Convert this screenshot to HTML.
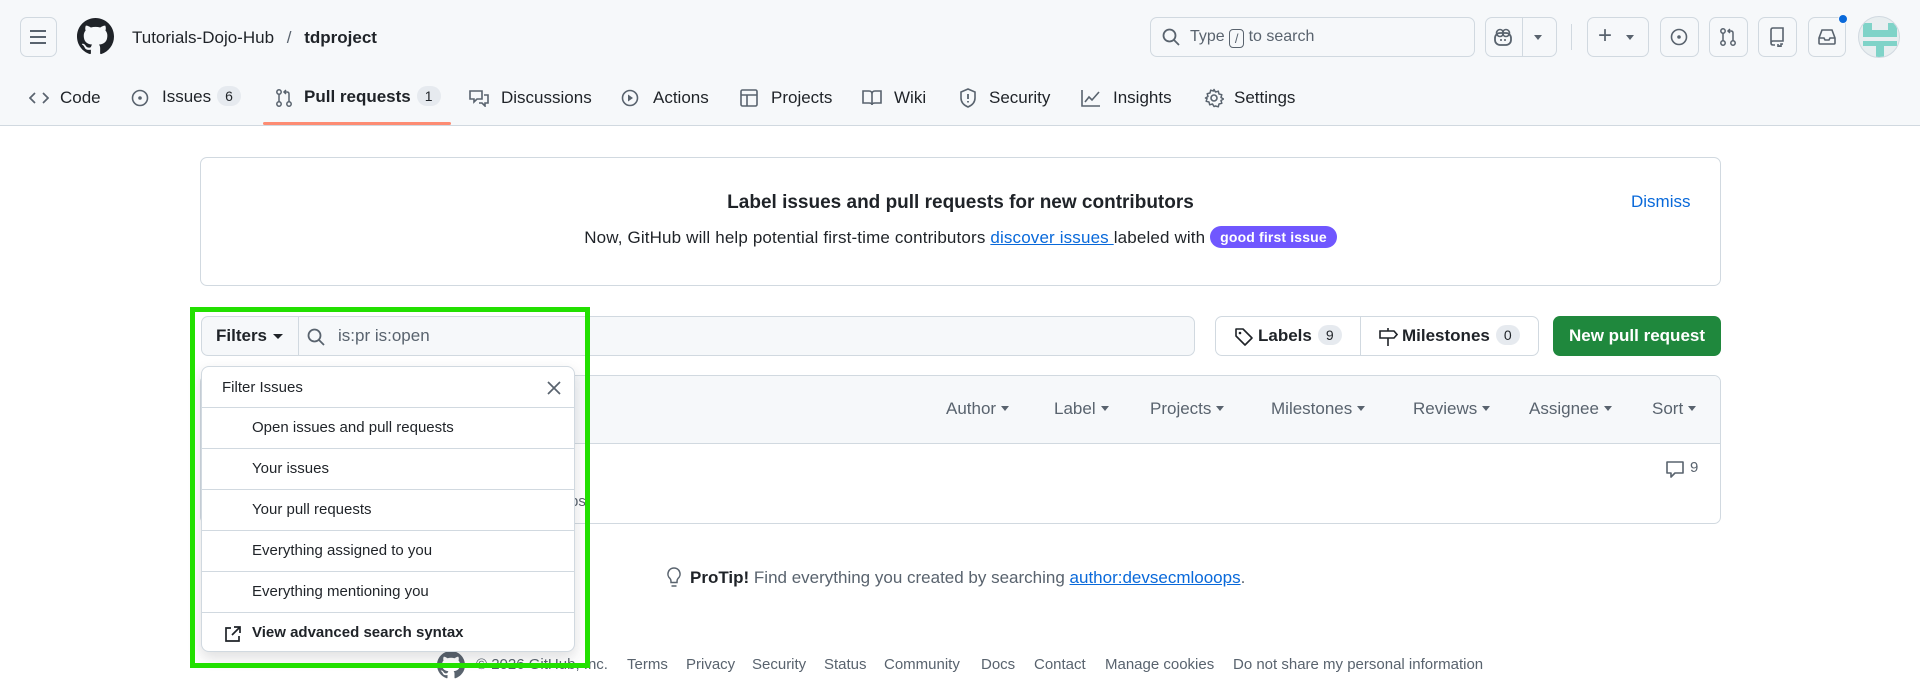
<!DOCTYPE html>
<html><head><meta charset="utf-8">
<style>
*{box-sizing:border-box;margin:0;padding:0}
body{width:1920px;height:677px;overflow:hidden;background:#fff;font-family:"Liberation Sans",sans-serif;color:#1f2328;position:relative}
.a{position:absolute;white-space:nowrap}
.hdr{position:absolute;left:0;top:0;width:1920px;height:126px;background:#f6f8fa;border-bottom:1px solid #d1d9e0}
.btn{position:absolute;border:1px solid #d1d9e0;border-radius:7px;background:#f6f8fa}
.tab{position:absolute;top:88px;font-size:17px;color:#1f2328}
.ic{position:absolute}
.cnt{display:inline-block;background:#e6eaef;border-radius:12px;padding:2px 8px;font-size:14px;margin-left:6px;vertical-align:1px}
svg{display:block}
.fi{position:absolute;left:0;width:373px;height:41px;border-top:1px solid #d1d9e0;font-size:15px;padding-left:50px;line-height:40px}
.sel{position:absolute;top:399px;font-size:17px;color:#59636e}
.sel:after{content:"";display:inline-block;border:4.5px solid transparent;border-top:5px solid #59636e;margin-left:5px;vertical-align:-1px}
.ft{position:absolute;top:656px;font-size:15px;color:#59636e}
</style></head><body>
<div class="hdr"></div>
<div class="btn" style="left:20px;top:17px;width:37px;height:40px;"></div>
<svg class="ic" style="left:29px;top:29px" width="18" height="16"><path d="M1 2h16M1 8h16M1 14h16" stroke="#59636e" stroke-width="2"/></svg>
<svg class="ic" style="left:77px;top:18px" width="37" height="37" viewBox="0 0 16 16"><path fill="#1f2328" d="M8 0C3.58 0 0 3.58 0 8c0 3.54 2.29 6.53 5.47 7.590.4.07.55-.17.55-.38 0-.19-.01-.82-.01-1.49-2.01.37-2.53-.49-2.69-.94-.09-.23-.48-.94-.82-1.13-.28-.15-.68-.52-.01-.53.63-.01 1.08.58 1.23.82.72 1.21 1.87.87 2.33.66.07-.52.28-.87.51-1.07-1.78-.2-3.64-.89-3.64-3.95 0-.87.31-1.59.82-2.15-.08-.2-.36-1.02.08-2.12 0 0 .67-.21 2.2.82.64-.18 1.32-.27 2-.27.68 0 1.36.09 2 .27 1.53-1.04 2.2-.82 2.2-.82.44 1.1.16 1.92.08 2.12.51.56.82 1.27.82 2.15 0 3.07-1.87 3.75-3.65 3.95.29.25.54.73.54 1.48 0 1.07-.01 1.93-.01 2.2 0 .21.15.46.55.38A8.013 8.013 0 0016 8c0-4.42-3.58-8-8-8z"/></svg>
<div class="a" style="left:132px;top:28px;font-size:17px">Tutorials-Dojo-Hub <span style="color:#59636e;margin:0 8px">/</span> <b>tdproject</b></div>

<div class="btn" style="left:1150px;top:17px;width:325px;height:40px;"></div>
<svg class="ic" style="left:1162px;top:28px" width="18" height="18"><circle cx="7.5" cy="7.5" r="6" fill="none" stroke="#59636e" stroke-width="1.8"/><path d="M12 12l5 5" stroke="#59636e" stroke-width="1.8"/></svg>
<div class="a" style="left:1190px;top:28px;font-size:16px;color:#59636e">Type <span style="display:inline-block;border:1px solid #59636e;border-radius:4px;width:15px;height:19px;text-align:center;font-size:13px;line-height:17px;vertical-align:-2px">/</span> to search</div>
<div class="btn" style="left:1485px;top:17px;width:72px;height:40px;"></div>
<div class="a" style="left:1522px;top:17px;width:1px;height:40px;background:#d1d9e0"></div>
<svg class="ic" style="left:1493px;top:28px" width="20" height="18"><rect x="2" y="5" width="16" height="12" rx="5" fill="none" stroke="#59636e" stroke-width="1.8"/><circle cx="7" cy="5" r="3.5" fill="none" stroke="#59636e" stroke-width="1.6"/><circle cx="13" cy="5" r="3.5" fill="none" stroke="#59636e" stroke-width="1.6"/><path d="M8 11v2M12 11v2" stroke="#59636e" stroke-width="1.6"/></svg>
<div class="a" style="left:1534px;top:35px;border:4.5px solid transparent;border-top:5px solid #59636e"></div>
<div class="a" style="left:1571px;top:24px;width:1px;height:26px;background:#d1d9e0"></div>
<div class="btn" style="left:1587px;top:17px;width:62px;height:40px;"></div>
<div class="a" style="left:1598px;top:22px;font-size:24px;color:#59636e">+</div>
<div class="a" style="left:1626px;top:35px;border:4.5px solid transparent;border-top:5px solid #59636e"></div>
<div class="btn" style="left:1660px;top:17px;width:39px;height:40px;"></div>
<svg class="ic" style="left:1670px;top:28px" width="18" height="18"><circle cx="9" cy="9" r="7.5" fill="none" stroke="#59636e" stroke-width="1.6"/><circle cx="9" cy="9" r="1.8" fill="#59636e"/></svg>
<div class="btn" style="left:1709px;top:17px;width:39px;height:40px;"></div>
<svg class="ic" style="left:1719px;top:27px" width="18" height="20"><circle cx="4" cy="4" r="2.2" fill="none" stroke="#59636e" stroke-width="1.5"/><circle cx="4" cy="16" r="2.2" fill="none" stroke="#59636e" stroke-width="1.5"/><circle cx="14" cy="16" r="2.2" fill="none" stroke="#59636e" stroke-width="1.5"/><path d="M4 6v8M14 14V6q0-2-2-2H9M11 2L9 4l2 2" fill="none" stroke="#59636e" stroke-width="1.5"/></svg>
<div class="btn" style="left:1758px;top:17px;width:39px;height:40px;"></div>
<svg class="ic" style="left:1769px;top:27px" width="16" height="20"><path d="M2 16V3q0-2 2-2h10v13H4q-2 0-2 2t2 2h2M9 17v3l1.5-1 1.5 1v-3h2" fill="none" stroke="#59636e" stroke-width="1.6"/></svg>
<div class="btn" style="left:1808px;top:17px;width:38px;height:40px;"></div>
<svg class="ic" style="left:1817px;top:28px" width="20" height="18"><path d="M2 10l3-8h10l3 8v5q0 1-1 1H3q-1 0-1-1zM2 10h5l1 2h4l1-2h5" fill="none" stroke="#59636e" stroke-width="1.6"/></svg>
<div class="a" style="left:1838px;top:14px;width:10px;height:10px;border-radius:50%;background:#0969da;border:1px solid #f6f8fa"></div>
<div class="a" style="left:1858px;top:16px;width:42px;height:42px;border-radius:50%;background:#e8eef0;border:1px solid #d1d9e0;overflow:hidden">
<div class="a" style="left:4px;top:6px;width:34px;height:14px;background:#7fd3c8"></div>
<div class="a" style="left:13px;top:6px;width:16px;height:7px;background:#e8eef0"></div>
<div class="a" style="left:4px;top:24px;width:34px;height:5px;background:#7fd3c8"></div>
<div class="a" style="left:17px;top:24px;width:8px;height:18px;background:#7fd3c8"></div>
</div>

<svg class="ic" style="left:29px;top:90px" width="20" height="16"><path d="M6 3L1 8l5 5M14 3l5 5-5 5" fill="none" stroke="#59636e" stroke-width="1.7"/></svg>
<div class="tab" style="left:60px">Code</div>
<svg class="ic" style="left:131px;top:89px" width="18" height="18"><circle cx="9" cy="9" r="7.5" fill="none" stroke="#59636e" stroke-width="1.6"/><circle cx="9" cy="9" r="1.8" fill="#59636e"/></svg>
<div class="tab" style="left:162px;top:86px">Issues<span class="cnt">6</span></div>
<svg class="ic" style="left:275px;top:88px" width="18" height="20"><circle cx="4" cy="4" r="2.2" fill="none" stroke="#59636e" stroke-width="1.5"/><circle cx="4" cy="16" r="2.2" fill="none" stroke="#59636e" stroke-width="1.5"/><circle cx="14" cy="16" r="2.2" fill="none" stroke="#59636e" stroke-width="1.5"/><path d="M4 6v8M14 14V6q0-2-2-2H9M11 2L9 4l2 2" fill="none" stroke="#59636e" stroke-width="1.5"/></svg>
<div class="tab" style="left:304px;top:86px;font-weight:bold">Pull requests<span class="cnt" style="font-weight:normal">1</span></div>
<div class="a" style="left:263px;top:122px;width:188px;height:3px;background:#fd8c73;border-radius:2px"></div>
<svg class="ic" style="left:469px;top:89px" width="20" height="18"><path d="M1 2h12v8H8l-3 3v-3H1zM15 6h4v8h-3v3l-3-3h-3" fill="none" stroke="#59636e" stroke-width="1.6"/></svg>
<div class="tab" style="left:501px">Discussions</div>
<svg class="ic" style="left:621px;top:89px" width="18" height="18"><circle cx="9" cy="9" r="7.5" fill="none" stroke="#59636e" stroke-width="1.6"/><path d="M7 5.5v7l5-3.5z" fill="#59636e"/></svg>
<div class="tab" style="left:653px">Actions</div>
<svg class="ic" style="left:740px;top:89px" width="18" height="18"><rect x="1" y="1" width="16" height="16" rx="1.5" fill="none" stroke="#59636e" stroke-width="1.6"/><path d="M1 6h16M7 6v11" stroke="#59636e" stroke-width="1.6"/></svg>
<div class="tab" style="left:771px">Projects</div>
<svg class="ic" style="left:862px;top:90px" width="20" height="16"><path d="M1 1h6q3 0 3 3v11q0-2-3-2H1zM19 1h-6q-3 0-3 3v11q0-2 3-2h6z" fill="none" stroke="#59636e" stroke-width="1.6"/></svg>
<div class="tab" style="left:894px">Wiki</div>
<svg class="ic" style="left:959px;top:88px" width="18" height="20"><path d="M9 1l7 3v6q0 6-7 9-7-3-7-9V4z" fill="none" stroke="#59636e" stroke-width="1.6"/><path d="M9 6v5M9 13v1.5" stroke="#59636e" stroke-width="1.8"/></svg>
<div class="tab" style="left:989px">Security</div>
<svg class="ic" style="left:1081px;top:89px" width="20" height="18"><path d="M1 1v16h18M4 13l4-5 3 3 7-8" fill="none" stroke="#59636e" stroke-width="1.6"/></svg>
<div class="tab" style="left:1113px">Insights</div>
<svg class="ic" style="left:1204px;top:88px" width="20" height="20" viewBox="0 0 20 20"><circle cx="10" cy="10" r="3" fill="none" stroke="#59636e" stroke-width="1.6"/><path d="M10 1.5l1.5 2.5 2.8-.8.7 2.8 2.8.7-.8 2.8 2.5 1.5-2.5 1.5.8 2.8-2.8.7-.7 2.8-2.8-.8L10 18.5l-1.5-2.5-2.8.8-.7-2.8-2.8-.7.8-2.8L1.5 10 4 8.5l-.8-2.8 2.8-.7.7-2.8 2.8.8z" fill="none" stroke="#59636e" stroke-width="1.5" stroke-linejoin="round"/></svg>
<div class="tab" style="left:1234px">Settings</div>

<div class="a" style="left:200px;top:157px;width:1521px;height:129px;border:1px solid #d1d9e0;border-radius:7px"></div>
<div class="a" style="left:200px;top:192px;width:1521px;text-align:center;font-size:19px;font-weight:bold">Label issues and pull requests for new contributors</div>
<div class="a" style="left:200px;top:226px;width:1521px;text-align:center;font-size:17px;letter-spacing:0.15px">Now, GitHub will help potential first-time contributors <span style="color:#0969da;text-decoration:underline">discover issues </span>labeled with <span style="display:inline-block;background:#7057ff;color:#fff;font-weight:bold;font-size:14px;border-radius:12px;padding:3px 10px;vertical-align:1px">good first issue</span></div>
<div class="a" style="left:1631px;top:192px;font-size:17px;color:#0969da">Dismiss</div>

<div class="a" style="left:201px;top:316px;width:994px;height:40px;border:1px solid #d1d9e0;border-radius:7px;background:#f6f8fa"></div>
<div class="a" style="left:298px;top:317px;width:1px;height:38px;background:#d1d9e0"></div>
<div class="a" style="left:216px;top:326px;font-size:17px;font-weight:bold">Filters</div>
<div class="a" style="left:273px;top:334px;border:5px solid transparent;border-top:5px solid #1f2328"></div>
<svg class="ic" style="left:307px;top:328px" width="18" height="18"><circle cx="7.5" cy="7.5" r="6" fill="none" stroke="#59636e" stroke-width="1.8"/><path d="M12 12l5 5" stroke="#59636e" stroke-width="1.8"/></svg>
<div class="a" style="left:338px;top:326px;font-size:17px;color:#59636e">is:pr is:open</div>

<div class="a" style="left:1215px;top:316px;width:324px;height:40px;border:1px solid #d1d9e0;border-radius:7px;background:#fff"></div>
<div class="a" style="left:1360px;top:317px;width:1px;height:38px;background:#d1d9e0"></div>
<svg class="ic" style="left:1234px;top:327px" width="20" height="20"><path d="M2 2h7l9 9-7 7-9-9z" fill="none" stroke="#1f2328" stroke-width="1.6" stroke-linejoin="round"/><circle cx="6" cy="6" r="1.3" fill="#1f2328"/></svg>
<div class="a" style="left:1258px;top:325px;font-size:17px;font-weight:bold">Labels<span class="cnt" style="font-weight:normal">9</span></div>
<svg class="ic" style="left:1378px;top:327px" width="20" height="20"><path d="M10 1v3M10 11v8M2 4h14l3 3.5-3 3.5H2z" fill="none" stroke="#1f2328" stroke-width="1.6"/></svg>
<div class="a" style="left:1402px;top:325px;font-size:17px;font-weight:bold">Milestones<span class="cnt" style="font-weight:normal">0</span></div>
<div class="a" style="left:1553px;top:316px;width:168px;height:40px;border-radius:7px;background:#1f883d;color:#fff;font-weight:bold;font-size:17px;text-align:center;line-height:40px">New pull request</div>

<div class="a" style="left:200px;top:375px;width:1521px;height:149px;border:1px solid #d1d9e0;border-radius:7px;overflow:hidden">
<div class="a" style="left:0;top:0;width:1521px;height:68px;background:#f6f8fa;border-bottom:1px solid #d1d9e0"></div>
</div>
<div class="sel" style="left:946px">Author</div>
<div class="sel" style="left:1054px">Label</div>
<div class="sel" style="left:1150px">Projects</div>
<div class="sel" style="left:1271px">Milestones</div>
<div class="sel" style="left:1413px">Reviews</div>
<div class="sel" style="left:1529px">Assignee</div>
<div class="sel" style="left:1652px">Sort</div>
<svg class="ic" style="left:1666px;top:461px" width="18" height="18"><path d="M1 1h16v11H9l-4 4v-4H1z" fill="none" stroke="#59636e" stroke-width="1.6" stroke-linejoin="round"/></svg>
<div class="a" style="left:1690px;top:459px;font-size:15px;color:#59636e">9</div>
<div class="a" style="left:570px;top:493px;font-size:15px;color:#59636e">ps</div>

<svg class="ic" style="left:667px;top:567px" width="14" height="22"><path d="M7 1a6 6 0 0 0-4 10.5q1 1 1 3v1h6v-1q0-2 1-3A6 6 0 0 0 7 1zM4.5 19h5" fill="none" stroke="#59636e" stroke-width="1.5"/></svg>
<div class="a" style="left:690px;top:568px;font-size:17px;color:#59636e"><b style="color:#1f2328">ProTip!</b> Find everything you created by searching <span style="color:#0969da;text-decoration:underline">author:devsecmlooops</span>.</div>

<svg class="ic" style="left:437px;top:651px" width="28" height="28" viewBox="0 0 16 16"><path fill="#59636e" d="M8 0C3.58 0 0 3.58 0 8c0 3.54 2.29 6.53 5.47 7.59.4.07.55-.17.55-.38 0-.19-.01-.82-.01-1.49-2.01.37-2.53-.49-2.69-.94-.09-.23-.48-.94-.82-1.13-.28-.15-.68-.52-.01-.53.63-.01 1.08.58 1.23.82.72 1.21 1.87.87 2.33.66.07-.52.28-.87.51-1.07-1.78-.2-3.64-.89-3.64-3.95 0-.87.31-1.59.82-2.15-.08-.2-.36-1.02.08-2.12 0 0 .67-.21 2.2.82.64-.18 1.32-.27 2-.27.68 0 1.36.09 2 .27 1.53-1.04 2.2-.82 2.2-.82.44 1.1.16 1.92.08 2.12.51.56.82 1.27.82 2.15 0 3.07-1.87 3.75-3.65 3.95.29.25.54.73.54 1.48 0 1.07-.01 1.93-.01 2.2 0 .21.15.46.55.38A8.013 8.013 0 0016 8c0-4.42-3.58-8-8-8z"/></svg>
<div class="ft" style="left:476px">© 2026 GitHub, Inc.</div>
<div class="ft" style="left:627px">Terms</div>
<div class="ft" style="left:686px">Privacy</div>
<div class="ft" style="left:752px">Security</div>
<div class="ft" style="left:824px">Status</div>
<div class="ft" style="left:884px">Community</div>
<div class="ft" style="left:981px">Docs</div>
<div class="ft" style="left:1034px">Contact</div>
<div class="ft" style="left:1105px">Manage cookies</div>
<div class="ft" style="left:1233px">Do not share my personal information</div>

<div class="a" style="left:201px;top:366px;width:374px;height:286px;border:1px solid #d1d9e0;border-radius:8px;background:#fff;box-shadow:0 6px 14px rgba(37,41,46,.15);overflow:hidden">
<div class="a" style="left:20px;top:12px;font-size:15px">Filter Issues</div>
<svg class="ic" style="left:345px;top:14px" width="14" height="14"><path d="M1 1l12 12M13 1L1 13" stroke="#59636e" stroke-width="1.7"/></svg>
<div class="fi" style="top:40px">Open issues and pull requests</div>
<div class="fi" style="top:81px">Your issues</div>
<div class="fi" style="top:122px">Your pull requests</div>
<div class="fi" style="top:163px">Everything assigned to you</div>
<div class="fi" style="top:204px">Everything mentioning you</div>
<div class="fi" style="top:245px;font-weight:bold">View advanced search syntax</div>
<svg class="ic" style="left:22px;top:258px" width="18" height="18"><path d="M7 3H2v13h13v-5M10 2h6v6M16 2L8 10" fill="none" stroke="#1f2328" stroke-width="1.7"/></svg>
</div>

<div class="a" style="left:190px;top:307px;width:400px;height:361px;border:5px solid #22e000"></div>
</body></html>
